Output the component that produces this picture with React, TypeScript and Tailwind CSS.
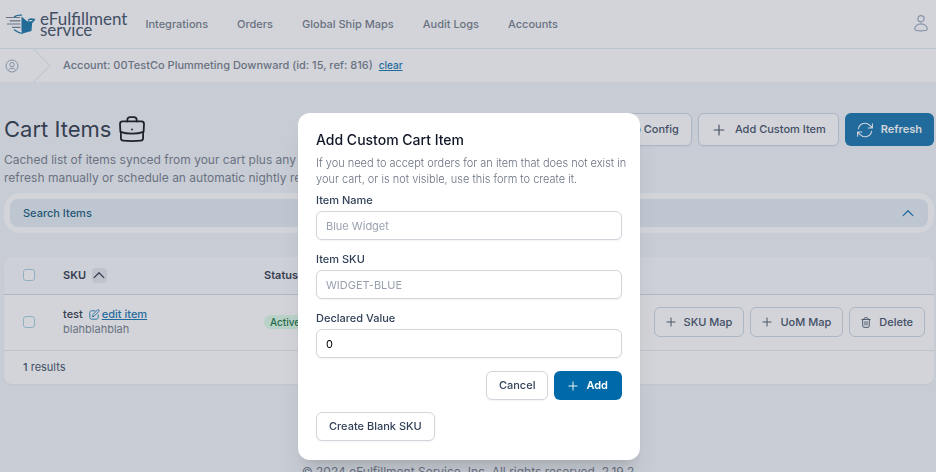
import React from "react";

type IconProps = { className?: string };

const PlusIcon: React.FC<IconProps> = ({ className }) => (
  <svg viewBox="0 0 16 16" fill="none" stroke="currentColor" strokeWidth="1.5" strokeLinecap="round" className={className}>
    <path d="M8 1.500v13M1.500 8h13" />
  </svg>
);

const ChevronUpIcon: React.FC<IconProps> = ({ className }) => (
  <svg viewBox="0 0 16 16" fill="none" stroke="currentColor" strokeWidth="1.6" strokeLinecap="round" strokeLinejoin="round" className={className}>
    <path d="M1.500 11.500l6.500-6.500 6.500 6.500" />
  </svg>
);

const RefreshIcon: React.FC<IconProps> = ({ className }) => (
  <svg viewBox="0 0 16 16" fill="none" stroke="currentColor" strokeWidth="1.1" strokeLinecap="round" strokeLinejoin="round" className={className}>
    <path d="M1.4 6.600A6.700 6.700 0 0 1 12.800 3.300l2.500 2.600M15.400 1.700V6h-4.200" />
    <path d="M14.600 9.400A6.700 6.700 0 0 1 3.200 12.700L.7 10.100M.6 14.300V10h4.200" />
  </svg>
);

const TrashIcon: React.FC<IconProps> = ({ className }) => (
  <svg viewBox="0 0 14 16" fill="none" stroke="currentColor" strokeWidth="1.3" strokeLinecap="round" strokeLinejoin="round" className={className}>
    <path d="M1 3.600h12M4.200 3.400V2.400C4.200 1.600 4.800 1 5.600 1h2.800c.8 0 1.400.6 1.400 1.400v1" />
    <path d="M2 3.800l.4 9.600c0 1 .7 1.700 1.700 1.700h5.800c1 0 1.700-.7 1.700-1.700l.4-9.600M5.500 6.600v5M8.500 6.600v5" />
  </svg>
);

const EditIcon: React.FC<IconProps> = ({ className }) => (
  <svg viewBox="0 0 16 16" fill="none" stroke="currentColor" strokeWidth="1.3" strokeLinecap="round" strokeLinejoin="round" className={className}>
    <path d="M8.500 2.600H3.600C2.200 2.600 1.200 3.600 1.200 5v7.400c0 1.400 1 2.400 2.400 2.400H11c1.400 0 2.400-1 2.400-2.400V8.500" />
    <path d="M5.200 11l.7-3.200L12.400 1.200c.6-.5 1.400-.5 2 0 .6.6.6 1.500 0 2.100L8 10z" />
  </svg>
);

const BriefcaseIcon: React.FC<IconProps> = ({ className }) => (
  <svg viewBox="0 0 26 26" fill="none" stroke="currentColor" strokeWidth="1.800" strokeLinecap="round" strokeLinejoin="round" className={className}>
    <path d="M8.300 5.400V4c0-1.600 1.200-2.800 2.800-2.800h3.800c1.600 0 2.800 1.200 2.800 2.800v1.400" />
    <path d="M3.600 5.400h18.800c1.600 0 2.600 1 2.600 2.500l-.4 8c-3.400 1.200-7.300 1.800-11.600 1.800s-8.200-.6-11.600-1.800L1 7.900c0-1.500 1-2.500 2.600-2.500z" />
    <path d="M1.900 16v6.300c0 1.300.9 2.200 2.200 2.300 5.900.6 11.900.6 17.800 0 1.300-.1 2.200-1 2.200-2.300V16" />
    <path d="M13 13.300v.2" />
  </svg>
);

const UserIcon: React.FC<IconProps> = ({ className }) => (
  <svg viewBox="0 0 14 18" fill="none" stroke="currentColor" strokeWidth="1.200" className={className}>
    <circle cx="7" cy="3.700" r="3.100" />
    <path d="M7 8.900c3.600 0 6.200 2.300 6.200 4.900 0 1-.7 1.500-1.700 1.700-3 .6-6 .6-9 0-1-.2-1.700-.7-1.700-1.700 0-2.600 2.600-4.900 6.200-4.900z" />
  </svg>
);

const AccountIcon: React.FC<IconProps> = ({ className }) => (
  <svg viewBox="0 0 14 14" fill="none" stroke="currentColor" strokeWidth="1" className={className}>
    <circle cx="7" cy="7" r="6" />
    <circle cx="7" cy="5.600" r="2.200" />
    <path d="M3.400 11.600c.3-1.500 1.800-2.300 3.600-2.300s3.300.8 3.600 2.300" />
  </svg>
);

const Logo = () => (
  <a href="#" className="flex items-center gap-1" aria-label="eFulfillment service">
    <svg viewBox="0 0 30 20" className="h-5 w-[30px]" fill="none">
      <path d="M.5 3.500h13M4 6.800h10M1.500 10h12.500M6.500 13.300h7.500" stroke="#64748b" strokeWidth="1.200" strokeLinecap="round" />
      <path d="M15.500 2.500L21 7.200h5.300L25.500 17l-9 2.500-1-2.500z" fill="#0369a1" />
      <path d="M8.500 2.600c2-1.200 4.200-1.600 7-1.400M8.500 16c2 1.600 4.500 2.900 8 3.300" stroke="#0369a1" strokeWidth="1.300" strokeLinecap="round" />
      <path d="M26 7.300L28.500 5.500M22 6.300l2.200-1.300 4.300.5-2.600 3" stroke="#0369a1" strokeWidth="1.400" strokeLinejoin="round" />
    </svg>
    <span className="flex flex-col font-[Lato,sans-serif] text-[17px] leading-[11px] text-slate-700">
      <span>
        eFulf<span className="text-sky-600">i</span>llment
      </span>
      <span>service</span>
    </span>
  </a>
);

const NAV_LINKS = ["Integrations", "Orders", "Global Ship Maps", "Audit Logs", "Accounts"];

const FIELDS = [
  { id: "item-name", label: "Item Name", placeholder: "Blue Widget" },
  { id: "item-sku", label: "Item SKU", placeholder: "WIDGET-BLUE" },
  { id: "declared-value", label: "Declared Value", value: "0" },
];

const CHECKBOX = "block size-3 appearance-none rounded-[3px] border border-[#a3cbe0] bg-white";
const ROW_BUTTON =
  "flex h-[30px] items-center gap-2 rounded-md border border-slate-300 bg-white px-[11px] text-[11px] font-medium text-slate-700";
const TOP_BUTTON =
  "flex h-[33px] items-center gap-2 rounded-md border border-slate-300 bg-white px-3 text-[11px] font-medium text-slate-700 shadow-xs";
const MODAL_BUTTON =
  "flex h-[29px] items-center rounded-md border border-gray-300 bg-white px-3 text-[11px] font-medium text-slate-700 shadow-xs";

const TopBar = () => (
  <>
    <header className="flex h-[49px] items-center border-b border-[#dce8f0] bg-white pl-1.5 pr-2">
      <Logo />
      <nav className="ml-[18px] flex flex-1 gap-[29px] text-[11px] font-medium text-gray-500">
        {NAV_LINKS.map((link) => (
          <a key={link} href="#">
            {link}
          </a>
        ))}
      </nav>
      <button type="button" aria-label="Profile" className="text-slate-400">
        <UserIcon className="h-[18px] w-3.5" />
      </button>
    </header>
    <div className="flex h-[33px] items-center bg-white pl-[5px] text-[11px] font-medium text-gray-500">
      <AccountIcon className="size-3.5 text-slate-400" />
      <svg viewBox="0 0 18 33" fill="none" stroke="#dbe3ea" className="ml-3.5 h-full w-[18px]">
        <path d="M.5 0L17 16.500.5 33" />
      </svg>
      <span className="ml-3">Account: 00TestCo Plummeting Downward (id: 15, ref: 816)</span>
      <a href="#" className="ml-1.5 text-[10px] text-sky-700 underline">
        clear
      </a>
    </div>
  </>
);

const PageHeading = () => (
  <div className="flex items-start justify-between">
    <div>
      <h1 className="flex items-center gap-2 text-[22px] leading-8 text-slate-800">
        Cart Items
        <BriefcaseIcon className="size-[26px] text-black" />
      </h1>
      <p className="mt-1.5 text-xs leading-[18px] text-gray-500">
        Cached list of items synced from your cart plus any custom items.
        <br />
        refresh manually or schedule an automatic nightly refresh.
      </p>
    </div>
    <div className="flex gap-1.5">
      <button type="button" className={TOP_BUTTON}>
        Auto Config
      </button>
      <button type="button" className={TOP_BUTTON}>
        <PlusIcon className="mx-0.5 size-3" />
        Add Custom Item
      </button>
      <button type="button" className="flex h-[33px] items-center gap-2 rounded-md bg-sky-700 px-3 text-[11px] font-semibold text-white">
        <RefreshIcon className="size-4" />
        Refresh
      </button>
    </div>
  </div>
);

const ItemsTable = () => (
  <div className="mt-6 overflow-hidden rounded-lg bg-white shadow-xs">
    <table className="w-full text-left text-[11px]">
      <thead className="bg-slate-50 text-slate-800">
        <tr className="h-[37px] border-b border-slate-300">
          <th className="w-[59px] pl-[19px]">
            <input type="checkbox" aria-label="Select all" className={CHECKBOX} />
          </th>
          <th className="w-[201px] font-semibold">
            <button type="button" className="flex items-center gap-1.5">
              SKU
              <span className="flex size-[15px] items-center justify-center rounded-sm bg-gray-200">
                <ChevronUpIcon className="size-3" />
              </span>
            </button>
          </th>
          <th className="font-semibold" colSpan={2}>
            Status
          </th>
        </tr>
      </thead>
      <tbody>
        <tr className="h-14 border-b border-slate-200">
          <td className="pl-[19px]">
            <input type="checkbox" aria-label="Select test" className={CHECKBOX} />
          </td>
          <td className="leading-[15px]">
            <div className="flex items-center gap-1.5 font-medium text-slate-800">
              test
              <a href="#" className="flex items-center gap-0.5 font-medium text-sky-700 underline">
                <EditIcon className="size-[11px]" />
                edit item
              </a>
            </div>
            <div className="text-gray-500">blahblahblah</div>
          </td>
          <td>
            <span className="rounded-full bg-green-100 px-1.5 py-px text-[10px] font-medium text-green-800">Active</span>
          </td>
          <td className="pr-[9px]">
            <div className="flex justify-end gap-1.5">
              <button type="button" className={ROW_BUTTON}>
                <PlusIcon className="size-2.5" />
                SKU Map
              </button>
              <button type="button" className={ROW_BUTTON}>
                <PlusIcon className="size-2.5" />
                UoM Map
              </button>
              <button type="button" className={ROW_BUTTON}>
                <TrashIcon className="h-[11px] w-2.5" />
                Delete
              </button>
            </div>
          </td>
        </tr>
      </tbody>
    </table>
    <p className="px-[19px] text-[11px] leading-[33px] text-slate-700">
      <span className="font-medium">1</span> results
    </p>
  </div>
);

const AddItemModal = () => (
  <div className="fixed inset-0 flex items-start justify-center bg-gray-500/30 pl-0.5 pt-[113px]">
    <div
      role="dialog"
      aria-labelledby="dialog-title"
      className="w-full max-w-[342px] rounded-xl bg-white px-[18px] pb-[19px] pt-[17px] shadow-xl"
    >
      <h2 id="dialog-title" className="text-sm font-medium leading-5 text-gray-900">
        Add Custom Cart Item
      </h2>
      <p className="-mr-3 mt-[5px] text-[11px] font-light leading-4 text-gray-500">
        If you need to accept orders for an item that does not exist in
        <br />
        your cart, or is not visible, use this form to create it.
      </p>
      <form className="mt-1.5">
        <div className="flex flex-col gap-3">
          {FIELDS.map((field) => (
            <div key={field.id}>
              <label htmlFor={field.id} className="block text-[11px] font-medium leading-[14px] text-slate-700">
                {field.label}
              </label>
              <input
                id={field.id}
                type="text"
                placeholder={field.placeholder}
                defaultValue={field.value}
                className="mt-1 block h-[29px] w-full rounded-md border border-gray-300 bg-white px-[9px] text-[11px] text-black shadow-xs placeholder:text-gray-400"
              />
            </div>
          ))}
        </div>
        <div className="mt-[13px] flex justify-end gap-1.5">
          <button type="button" className={MODAL_BUTTON}>
            Cancel
          </button>
          <button type="submit" className="flex h-[29px] items-center gap-2 rounded-md bg-sky-700 px-3.5 text-[11px] font-semibold text-white">
            <PlusIcon className="size-2.5" />
            Add
          </button>
        </div>
        <button type="button" className={`${MODAL_BUTTON} mt-3`}>
          Create Blank SKU
        </button>
      </form>
    </div>
  </div>
);

export default function App() {
  return (
    <div className="h-screen overflow-hidden bg-slate-100 font-[Inter,sans-serif]">
      <TopBar />
      <main className="pl-1 pr-0.5 pt-[31px]">
        <PageHeading />
        <section className="mt-1.5 rounded-2xl bg-white p-1.5">
          <button
            type="button"
            className="flex h-7 w-full items-center justify-between rounded-lg bg-[#e3edf4] pl-[13px] pr-3.5 text-[11px] font-medium text-sky-900"
          >
            Search Items
            <ChevronUpIcon className="size-3 text-sky-700" />
          </button>
        </section>
        <ItemsTable />
      </main>
      <footer className="mt-20 text-center text-xs leading-4 text-gray-500">
        © 2024 eFulfillment Service, Inc. All rights reserved. 2.19.2
      </footer>
      <AddItemModal />
    </div>
  );
}
